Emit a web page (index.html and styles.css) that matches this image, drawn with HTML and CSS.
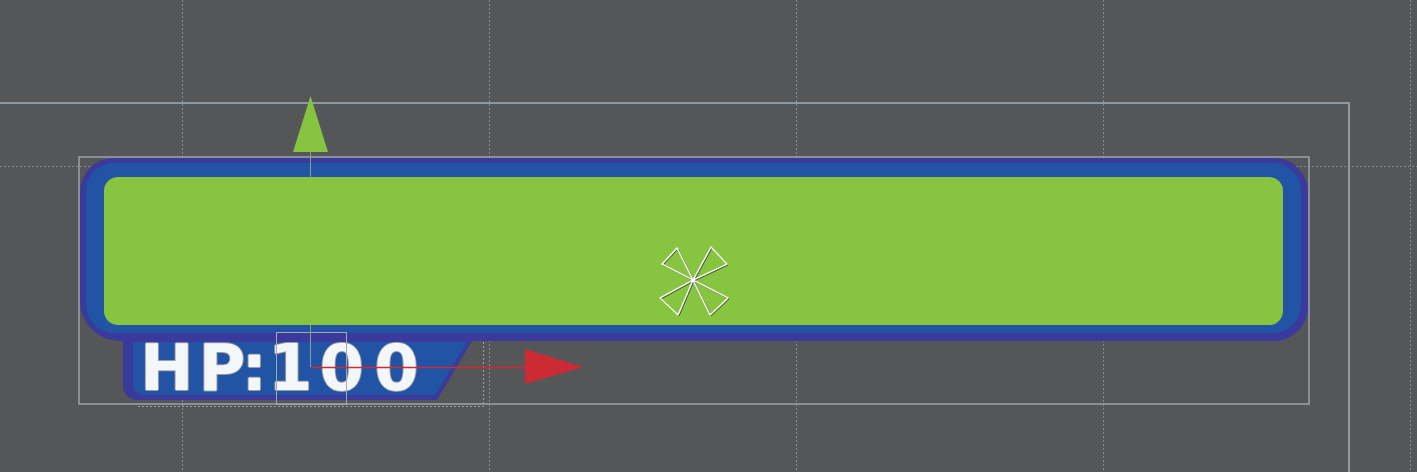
FILE: index.html
```html
<!DOCTYPE html>
<html>
<head>
<meta charset="utf-8">
<link rel="stylesheet" href="styles.css">
</head>
<body>
<div class="scene">
  <div class="grid-v">
    <div class="gline"></div>
    <div class="gline"></div>
    <div class="gline"></div>
    <div class="gline"></div>
    <div class="gline"></div>
  </div>
  <div class="grid-h"></div>
  <div class="canvas-rect"></div>

  <div class="widget">
    <div class="bar">
      <div class="bar-inner">
        <div class="fill"></div>
      </div>
    </div>
    <div class="tab">
      <div class="tab-inner">
        <div class="hp"><span class="h">H</span><span class="p">P</span><span class="colon">:</span><span class="one">1</span><span class="zero">0</span>0</div>
      </div>
    </div>
  </div>

  <svg class="gizmos" width="1417" height="472" viewBox="0 0 1417 472">
    <rect x="79" y="157" width="1230" height="247" fill="none" stroke="#9aa3ab" stroke-width="1.5"/>
    <path d="M138 406.5 H483.5 V342" fill="none" stroke="#9aa3ab" stroke-dasharray="2 2"/>
    <rect x="276.5" y="332.5" width="70" height="72" fill="none" stroke="#a3aab0"/>
    <path d="M310.5 150 V178 M310.5 325 V367" fill="none" stroke="#8c9c8e" stroke-width="1"/>
    <polygon points="310.5,96 293,152 328,152" fill="#86c440"/>
    <line x1="311" y1="367.5" x2="528" y2="367.5" stroke="#cc2b36" stroke-width="1.5"/>
    <polygon points="525,349 583,367 525,384" fill="#cc2b36"/>
    <g fill="none" stroke="#4a4a4e" stroke-width="1" transform="translate(1,1)">
      <polygon points="693,280 662,264 677,248"/>
      <polygon points="693,280 711,247 727,264"/>
      <polygon points="693,280 660,298 678,315"/>
      <polygon points="693,280 710,315 728,298"/>
    </g>
    <g fill="none" stroke="#ffffff" stroke-width="1.3">
      <polygon points="693,280 662,264 677,248"/>
      <polygon points="693,280 711,247 727,264"/>
      <polygon points="693,280 660,298 678,315"/>
      <polygon points="693,280 710,315 728,298"/>
    </g>
  </svg>
</div>
</body>
</html>
```

FILE: styles.css
```css
html, body {
  margin: 0;
  padding: 0;
  width: 1417px;
  height: 472px;
  overflow: hidden;
  background: #555658;
}

.scene {
  position: relative;
  width: 1417px;
  height: 472px;
  overflow: hidden;
  background: #555658;
}

.grid-v {
  position: absolute;
  top: 0;
  left: 0;
  width: 100%;
  height: 100%;
  display: flex;
  gap: 306px;
  padding-left: 182px;
  box-sizing: border-box;
}

.gline {
  width: 1px;
  height: 100%;
  flex: none;
  background: repeating-linear-gradient(to bottom, #7e8b97 0 2px, transparent 2px 4px);
}

.grid-h {
  position: absolute;
  left: 0;
  right: 0;
  top: 166px;
  height: 1px;
  background: repeating-linear-gradient(to right, #7e8b97 0 2px, transparent 2px 4px);
}

.canvas-rect {
  position: absolute;
  left: -10px;
  top: 102px;
  width: 1360px;
  height: 420px;
  box-sizing: border-box;
  border: 2px solid #8e98a1;
}

.widget {
  position: absolute;
  left: 80px;
  top: 158px;
  width: 1228px;
}

.bar {
  background: #3a3a9c;
  padding: 5px 7px 8px 6px;
  border-radius: 34px 34px 34px 40px;
}

.bar-inner {
  background: #2154a5;
  padding: 14px 18px 8px 18px;
  border-radius: 28px;
}

.fill {
  height: 148px;
  background: #87c541;
  border-radius: 14px;
}

.tab {
  margin-left: 43px;
  width: 349px;
  height: 59px;
  box-sizing: border-box;
  padding: 1px 0 5px 10px;
  background: #3a3a9c;
  border-bottom-left-radius: 14px;
  clip-path: polygon(0 0, 100% 0, calc(100% - 35px) 100%, 0 100%);
}

.tab-inner {
  height: 53px;
  box-sizing: border-box;
  padding-left: 7px;
  background: #2154a5;
  border-bottom-left-radius: 10px;
  clip-path: polygon(0 0, calc(100% - 5px) 0, calc(100% - 37px) 100%, 0 100%);
}

.hp {
  font-family: "DejaVu Sans", sans-serif;
  font-weight: bold;
  font-size: 64px;
  line-height: 52px;
  letter-spacing: 0;
  color: #f4f7f9;
  white-space: nowrap;
  text-shadow: 1px 0 0 #9a9ea3, -1px 0 0 #9a9ea3, 0 1px 0 #9a9ea3, 0 -1px 0 #9a9ea3;
}

.hp .h {
  letter-spacing: 5px;
}

.hp .p {
  letter-spacing: -4px;
}

.hp .colon {
  letter-spacing: 1px;
}

.hp .one {
  letter-spacing: 7px;
}

.hp .zero {
  letter-spacing: 10px;
}

.gizmos {
  position: absolute;
  top: 0;
  left: 0;
}
```
